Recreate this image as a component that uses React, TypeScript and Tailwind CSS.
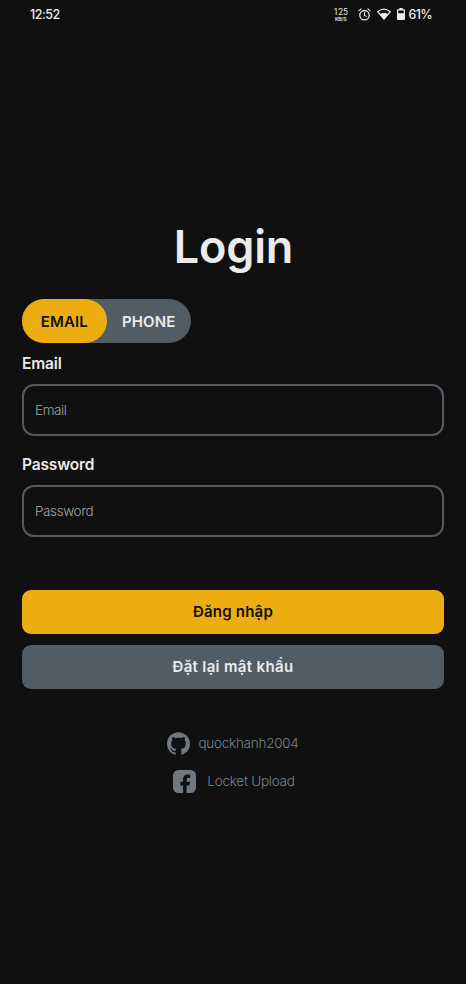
import React from "react";

function StatusBar() {
  return (
    <header className="flex h-7 items-center justify-between pl-[30px] pr-[34px] text-[#ebebeb]">
      <span className="pt-px text-[12.5px] font-medium leading-7 tracking-[-0.45px]">12:52</span>
      <div className="flex items-center">
        <div className="mr-[10px] flex w-[14px] flex-col items-center pt-px font-['Roboto',sans-serif]">
          <span className="h-[8px] text-[8.5px] leading-[8px]">125</span>
          <span className="h-[6px] text-[5.5px] font-medium leading-[6px] tracking-[-0.3px]">KB/S</span>
        </div>
        <svg className="mr-[6px] h-[13px] w-[13px]" viewBox="0 0 13 13" fill="none" stroke="currentColor">
          <circle cx="6.5" cy="7.2" r="4.7" strokeWidth="1.3" />
          <path d="M6.5 4.2v3.2l2 1.2M.6 3.1 3.4.7M12.4 3.1 9.6.7" strokeWidth="1.1" />
        </svg>
        <svg className="mr-[6px] h-[12px] w-[14px]" viewBox="0 0 14 12">
          <path d="M.8 3.7Q7-1.3 13.2 3.7L7 11Z" fill="none" stroke="currentColor" strokeWidth="1.2" />
          <path d="M2.8 6.2Q7 3.2 11.2 6.2L7 11.3Z" fill="currentColor" />
        </svg>
        <svg className="mr-[4px] h-[12px] w-[8px]" viewBox="0 0 8 12">
          <path fill="currentColor" fillRule="evenodd" d="M2.3 0h3.4v1.3H7a1 1 0 0 1 1 1V11a1 1 0 0 1-1 1H1a1 1 0 0 1-1-1V2.3a1 1 0 0 1 1-1h1.3ZM1.2 2.6v2.6h5.6V2.6Z" />
        </svg>
        <span className="pt-px text-[12.5px] font-medium leading-7 tracking-[-0.7px]">61%</span>
      </div>
    </header>
  );
}

function Field({ label, type }: { label: string; type: string }) {
  return (
    <label className="flex flex-col">
      <span className="h-[22px] text-[15.5px] font-semibold leading-[22px] tracking-[-0.15px] text-[#ebebeb]">{label}</span>
      <input
        type={type}
        placeholder={label}
        className="mt-[9px] h-[52px] w-full rounded-[12px] border-2 border-[#525c65] bg-transparent px-[11px] pb-px text-[13.5px] font-light tracking-[-0.4px] text-[#ebebeb] outline-none placeholder:text-[#a3a3a5]"
      />
    </label>
  );
}

export default function App() {
  return (
    <div className="flex h-[984px] w-full flex-col bg-[#101010] font-['Inter','Noto_Sans',sans-serif]">
      <StatusBar />
      <main className="flex flex-col px-[22px] pt-[189px]">
        <h1 className="h-[60px] pl-px text-center text-[45px] font-semibold leading-[60px] tracking-[-0.2px] text-[#ebebeb]">Login</h1>
        <div className="mt-[22px] flex h-[44px] w-[169px] rounded-full bg-[#525c65] text-[15px] font-semibold">
          <button className="h-full w-[84.5px] rounded-full bg-[#edad10] pt-[2px] tracking-[0.1px] text-[#101010]">EMAIL</button>
          <button className="h-full w-[84.5px] pt-[2px] tracking-[0.1px] text-[#ebebeb]">PHONE</button>
        </div>
        <div className="mt-[10px] flex flex-col gap-[18px]">
          <Field label="Email" type="text" />
          <Field label="Password" type="password" />
        </div>
        <button className="mt-[53px] h-[44px] rounded-[9px] bg-[#edad10] text-[15px] font-semibold tracking-[0.22px] text-[#101010]">Đăng nhập</button>
        <button className="mt-[11px] h-[44px] rounded-[9px] bg-[#525c65] text-[15px] font-semibold tracking-[0.35px] text-[#ebebeb]">Đặt lại mật khẩu</button>
        <footer className="mt-[43px] flex flex-col items-center gap-[15px] text-[13.5px] font-light tracking-[-0.25px] text-[#7a838d]">
          <a className="flex h-[23px] items-center gap-[8px]">
            <svg className="h-[23px] w-[23px] text-[#6f7882]" viewBox="0 0 24 24" fill="currentColor">
              <path d="M12 .297c-6.63 0-12 5.373-12 12 0 5.303 3.438 9.8 8.205 11.385.6.113.82-.258.82-.577 0-.285-.01-1.04-.015-2.04-3.338.724-4.042-1.61-4.042-1.61C4.422 18.07 3.633 17.7 3.633 17.7c-1.087-.744.084-.729.084-.729 1.205.084 1.838 1.236 1.838 1.236 1.07 1.835 2.809 1.305 3.495.998.108-.776.417-1.305.76-1.605-2.665-.3-5.466-1.332-5.466-5.93 0-1.31.465-2.38 1.235-3.22-.135-.303-.54-1.523.105-3.176 0 0 1.005-.322 3.3 1.23.96-.267 1.98-.399 3-.405 1.02.006 2.04.138 3 .405 2.28-1.552 3.285-1.23 3.285-1.23.645 1.653.24 2.873.12 3.176.765.84 1.23 1.91 1.23 3.22 0 4.61-2.805 5.625-5.475 5.92.42.36.81 1.096.81 2.22 0 1.606-.015 2.896-.015 3.286 0 .315.21.69.825.57C20.565 22.092 24 17.592 24 12.297c0-6.627-5.373-12-12-12" />
            </svg>
            <span>quockhanh2004</span>
          </a>
          <a className="flex h-[23px] items-center gap-[11px] pl-[2px]">
            <svg className="h-[23px] w-[23px] text-[#6f7882]" viewBox="0 0 23 23">
              <rect width="23" height="23" rx="5.5" fill="currentColor" />
              <path d="M10.1 22.2v-6.8H7.4v-3.6h2.7V9.9c0-3.8 1.6-5.4 5-5.4.7 0 1.8.1 2.2.2v3.1h-1.4c-1.7 0-2.3.6-2.3 2.2v1.8h3.5l-.6 3.6h-2.9V23h-3.5Z" fill="#101010" />
            </svg>
            <span>Locket Upload</span>
          </a>
        </footer>
      </main>
    </div>
  );
}
